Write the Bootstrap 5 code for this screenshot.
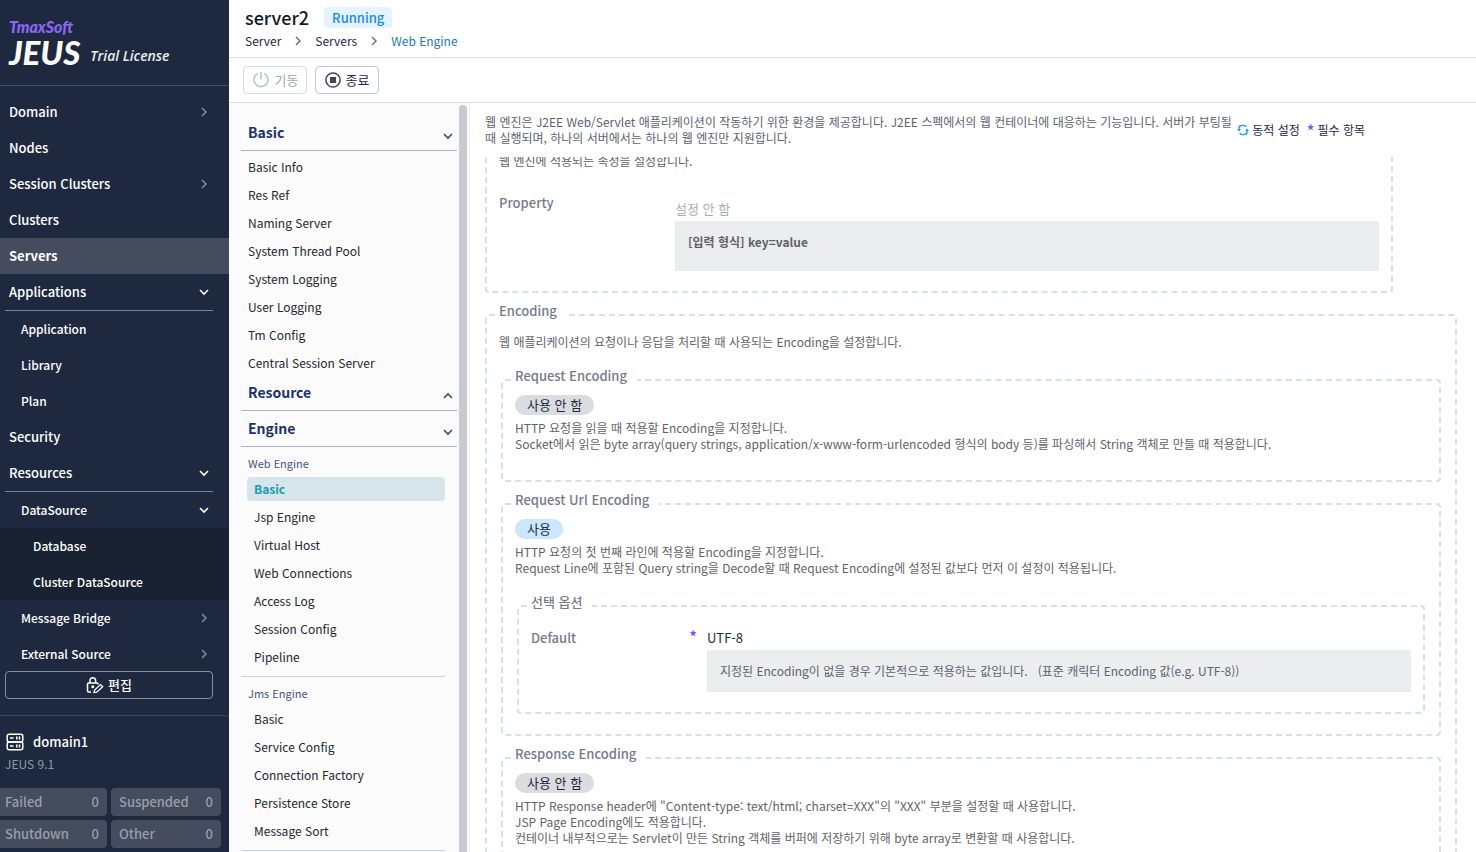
<!DOCTYPE html>
<html lang="ko">
<head>
<meta charset="utf-8">
<meta name="viewport" content="width=device-width, initial-scale=1">
<title>JEUS WebAdmin - server2</title>
<link href="https://cdn.jsdelivr.net/npm/bootstrap@5.3.0/dist/css/bootstrap.min.css" rel="stylesheet">
<style>
  body { font-family: "Noto Sans CJK KR", "Noto Sans", sans-serif; font-size: 13px; line-height: 16px; color: #1e293f; background: #fff; }
  a { text-decoration: none; color: inherit; }
  svg { flex: none; }

  /* left navigation */
  .side { width: 229px; background: #1e293f; color: #fff; }
  .brand { height: 86px; padding: 18px 9px 0; border-bottom: 1px solid #454e60; font-family: Lato, sans-serif; font-style: italic; }
  .brand-top { font-size: 16px; line-height: 18px; font-weight: 900; color: #8b67f7; }
  .brand-name { font-size: 33px; line-height: 32px; font-weight: 900; margin-right: 10px; }
  .brand-note { font-family: "Open Sans", sans-serif; font-size: 14px; line-height: 25px; font-weight: 600; color: #e9ebee; }
  .menu { padding-top: 8px; min-height: 0; overflow: hidden; }
  .menu a { display: flex; align-items: center; justify-content: space-between; height: 36px; padding: 0 17px 0 9px; font-weight: 500; flex: none; }
  .menu a.on { background: #454c5e; font-weight: 700; }
  .menu a.sub { padding-left: 21px; font-size: 12px; }
  .menu a.leaf { padding-left: 33px; font-size: 12px; background: #182230; }
  .menu hr { margin: 0 16px 0 5px; border-top: 1px solid #7c8493; opacity: 1; flex: none; }
  .menu .shut { color: #848b99; }
  .edit { margin: 0 16px 16px 5px; height: 28px; border: 1px solid #878e9a; border-radius: 4px; background: none; color: #fff; font-weight: 500; flex: none; }
  .domain { border-top: 1px solid #3d4658; border-top-right-radius: 4px; padding: 16px 8px 4px 0; }
  .domain-name { padding-left: 6px; gap: 9px; }
  .domain h2 { font-size: 13px; line-height: 20px; font-weight: 500; margin: 0; }
  .domain .ver { color: #9299a5; font-size: 12px; line-height: 16px; padding: 4px 5px 16px; }
  .stats { display: grid; grid-template-columns: 107px 1fr; gap: 4px; }
  .stat { display: flex; justify-content: space-between; height: 28px; line-height: 28px; padding: 0 8px; font-weight: 500; background: #454c5e; color: #989eaa; border-radius: 4px; }
  .stat:nth-child(odd) { padding-left: 5px; border-radius: 0 4px 4px 0; }

  /* page head */
  .page-head { height: 58px; padding: 6px 16px 0; border-bottom: 1px solid #dcdde1; }
  .page-head h1 { font-size: 18px; line-height: 22px; font-weight: 500; margin: 0 15px 0 0; color: #101828; }
  .state { line-height: 21px; font-weight: 500; padding: 0 8px; border-radius: 4px; background: #e5f3ff; color: #1a8ae8; }
  .crumbs { gap: 13px; font-size: 12px; margin-top: 5px; }
  .crumbs .here { color: #1e78b8; }
  .tools { height: 45px; padding: 8px 14px 0; gap: 8px; border-bottom: 1px solid #dcdde1; }
  .tool { height: 28px; width: 64px; padding: 0; border: 1px solid #c4c8d0; border-radius: 4px; background: #fff; color: #1e293f; gap: 5px; }
  .tool:disabled { color: #a3a8b1; border-color: #d9dce0; }

  /* second-level navigation */
  .panel { width: 241px; background: #fbfbfb; border-right: 1px solid #f0f1f2; }
  .panel-list { padding: 12px 2px 0 12px; overflow: hidden; font-size: 12px; }
  .panel-list h3 { display: flex; justify-content: space-between; height: 36px; margin: 0; padding: 0 3px 0 7px; border-bottom: 1px solid #adb4c4; font-size: 14px; line-height: 35px; font-weight: 700; color: #1b326b; flex: none; }
  .panel-list h3 svg { margin-top: 15px; color: #3e4966; }
  .panel-list a { display: block; height: 24px; line-height: 24px; margin: 2px 12px 2px 6px; padding-left: 7px; border-radius: 4px; flex: none; color: #23272f; }
  .panel-list .top a { margin: 4px 12px 0 0; }
  .panel-list a.on { background: #d6e5ea; color: #1b9ab3; font-weight: 700; }
  .panel-list h4 { font-size: 11px; line-height: 24px; font-weight: 400; margin: 0; padding: 4px 7px 0; color: #465583; flex: none; }
  .panel-list hr { margin: 5px 12px 0 0; border-top: 1px solid #cdd1d9; opacity: 1; flex: none; }
  .thumb { width: 8px; margin-top: 2px; margin-right: 2px; border-radius: 4px 4px 0 0; background: #c6cbd2; }

  /* settings */
  .intro { height: 54px; padding: 11px 111px 0 15px; gap: 1px; font-size: 12px; color: #5b6370; }
  .key { color: #1e293f; gap: 3px; padding-bottom: 12px; }
  .star { color: #7c4dff; font-size: 16px; font-weight: 500; }
  .sheet { overflow: hidden; min-height: 0; padding: 0 17px 0 13px; }
  fieldset, .group { border: 2px dashed #d8dfe9; border-radius: 4px; margin: 10px 2px 0; padding: 3px 12px 20px; }
  .group { border-top: 0; border-radius: 0 0 4px 4px; margin: 0 66px 0 2px; padding-top: 0; }
  .group > p { margin-top: -4px; }
  .group .line { padding-top: 14px; }
  legend { float: none; width: auto; margin: 0 0 0 -4px; padding: 0 10px 8px 4px; font-size: 13px; line-height: 16px; font-weight: 500; color: #747b89; }
  .sheet p { margin-bottom: 0; padding-bottom: 8px; font-size: 12px; color: #5f6368; }
  .use { display: inline-block; height: 20px; line-height: 20px; padding: 0 12px; border-radius: 10px; background: #dadce0; margin-bottom: 5px; vertical-align: top; }
  .use.yes { background: #c9e8ff; }
  .line { display: flex; padding-top: 5px; }
  .name { width: 176px; flex: none; padding-right: 10px; line-height: 24px; font-weight: 500; color: #747b89; }
  .name .star { line-height: 20px; }
  .val { line-height: 24px; }
  .val.none { padding-top: 6px; color: #a9aeb6; }
  .hint { background: #ecedef; padding: 13px; line-height: 16px; font-size: 12px; color: #5b6370; }
</style>
</head>
<body>
<svg class="d-none" aria-hidden="true">
  <symbol id="right" viewBox="0 0 16 16"><path d="M6 4l4 4-4 4" fill="none" stroke="currentColor" stroke-width="1.5"/></symbol>
  <symbol id="down" viewBox="0 0 16 16"><path d="M4 6l4 4 4-4" fill="none" stroke="currentColor" stroke-width="1.6"/></symbol>
  <symbol id="up" viewBox="0 0 16 16"><path d="M4 10l4-4 4 4" fill="none" stroke="currentColor" stroke-width="1.6"/></symbol>
</svg>
<div class="d-flex vh-100 overflow-hidden">

  <aside class="side d-flex flex-column flex-shrink-0">
    <div class="brand flex-shrink-0">
      <div class="brand-top">TmaxSoft</div>
      <div class="d-flex align-items-end"><span class="brand-name">JEUS</span><span class="brand-note">Trial License</span></div>
    </div>
    <nav class="menu d-flex flex-column flex-grow-1">
      <a href="#">Domain<svg class="shut" width="16" height="16"><use href="#right"/></svg></a>
      <a href="#">Nodes</a>
      <a href="#">Session Clusters<svg class="shut" width="16" height="16"><use href="#right"/></svg></a>
      <a href="#">Clusters</a>
      <a href="#" class="on">Servers</a>
      <a href="#">Applications<svg width="16" height="16"><use href="#down"/></svg></a>
      <hr>
      <a href="#" class="sub">Application</a>
      <a href="#" class="sub">Library</a>
      <a href="#" class="sub">Plan</a>
      <a href="#">Security</a>
      <a href="#">Resources<svg width="16" height="16"><use href="#down"/></svg></a>
      <hr>
      <a href="#" class="sub">DataSource<svg width="16" height="16"><use href="#down"/></svg></a>
      <a href="#" class="leaf">Database</a>
      <a href="#" class="leaf">Cluster DataSource</a>
      <a href="#" class="sub">Message Bridge<svg class="shut" width="16" height="16"><use href="#right"/></svg></a>
      <a href="#" class="sub">External Source<svg class="shut" width="16" height="16"><use href="#right"/></svg></a>
    </nav>
    <button type="button" class="edit d-flex align-items-center justify-content-center gap-1 p-0">
      <svg width="18" height="18" viewBox="0 0 18 18" fill="none" stroke="currentColor" stroke-width="1.5"><path d="M5 16H2.500Q1.500 16 1.500 15V8Q1.500 7 2.500 7H11Q12 7 12 8V8.500M4 7V4.500A2.800 2.800 0 0 1 9.600 4.500V7"/><circle cx="6.800" cy="10.800" r=".8" fill="currentColor"/><path d="M8 16.500L8.600 14L14.500 8.600L16.700 10.700L10.700 16.200Z" stroke-width="1.300"/></svg>
      편집
    </button>
    <section class="domain flex-shrink-0">
      <div class="domain-name d-flex align-items-center">
        <svg width="18" height="18" viewBox="0 0 18 18" fill="none" stroke="currentColor" stroke-width="1.500"><rect x="1.200" y="1.200" width="15.600" height="7.800" rx="2"/><rect x="1.200" y="9" width="15.600" height="7.800" rx="2"/><path d="M4 5H7.500M4 13H7.500M10.800 3.500V6.500M13.500 3.500V6.500M10.800 11.500V14.500M13.500 11.500V14.500"/></svg>
        <h2>domain1</h2>
      </div>
      <div class="ver">JEUS 9.1</div>
      <div class="stats">
        <div class="stat"><span>Failed</span><span>0</span></div>
        <div class="stat"><span>Suspended</span><span>0</span></div>
        <div class="stat"><span>Shutdown</span><span>0</span></div>
        <div class="stat"><span>Other</span><span>0</span></div>
      </div>
    </section>
  </aside>

  <div class="d-flex flex-column flex-grow-1 overflow-hidden">
    <header class="page-head flex-shrink-0">
      <div class="d-flex align-items-center">
        <h1>server2</h1><span class="state">Running</span>
      </div>
      <nav class="crumbs d-flex align-items-center" aria-label="breadcrumb">
        <a href="#">Server</a><svg width="8" height="16" viewBox="4 0 8 16"><path d="M6 4l4 4-4 4" fill="none" stroke="#6b7280" stroke-width="1.500"/></svg>
        <a href="#">Servers</a><svg width="8" height="16" viewBox="4 0 8 16"><path d="M6 4l4 4-4 4" fill="none" stroke="#6b7280" stroke-width="1.500"/></svg>
        <a href="#" class="here">Web Engine</a>
      </nav>
    </header>
    <div class="tools d-flex flex-shrink-0">
      <button type="button" class="tool d-flex align-items-center justify-content-center" disabled>
        <svg width="18" height="18" viewBox="0 0 18 18" fill="none" stroke="#bfc3ca" stroke-width="1.600"><path d="M6 2.400A7 7 0 1 0 12 2.400M9 1V8.500"/></svg>기동
      </button>
      <button type="button" class="tool d-flex align-items-center justify-content-center">
        <svg width="16" height="16" viewBox="0 0 16 16"><circle cx="8" cy="8" r="7.100" fill="none" stroke="#3e475a" stroke-width="1.500"/><rect x="5" y="5" width="6" height="6" fill="#3e475a"/></svg>종료
      </button>
    </div>

    <div class="d-flex flex-grow-1 overflow-hidden">
      <div class="panel d-flex flex-shrink-0">
        <nav class="panel-list d-flex flex-column flex-grow-1">
          <h3>Basic<svg width="12" height="12" viewBox="2 2 12 12"><use href="#down" width="16" height="16"/></svg></h3>
          <div class="top">
            <a href="#">Basic Info</a>
            <a href="#">Res Ref</a>
            <a href="#">Naming Server</a>
            <a href="#">System Thread Pool</a>
            <a href="#">System Logging</a>
            <a href="#">User Logging</a>
            <a href="#">Tm Config</a>
            <a href="#">Central Session Server</a>
          </div>
          <h3>Resource<svg width="12" height="12" viewBox="2 2 12 12"><use href="#up" width="16" height="16"/></svg></h3>
          <h3>Engine<svg width="12" height="12" viewBox="2 2 12 12"><use href="#down" width="16" height="16"/></svg></h3>
          <h4>Web Engine</h4>
          <a href="#" class="on">Basic</a>
          <a href="#">Jsp Engine</a>
          <a href="#">Virtual Host</a>
          <a href="#">Web Connections</a>
          <a href="#">Access Log</a>
          <a href="#">Session Config</a>
          <a href="#">Pipeline</a>
          <hr>
          <h4>Jms Engine</h4>
          <a href="#">Basic</a>
          <a href="#">Service Config</a>
          <a href="#">Connection Factory</a>
          <a href="#">Persistence Store</a>
          <a href="#">Message Sort</a>
          <hr>
        </nav>
        <div class="thumb flex-shrink-0"></div>
      </div>

      <main class="d-flex flex-column flex-grow-1 overflow-hidden">
        <div class="intro d-flex flex-shrink-0">
          <div class="flex-grow-1">웹 엔진은 J2EE Web/Servlet 애플리케이션이 작동하기 위한 환경을 제공합니다. J2EE 스펙에서의 웹 컨테이너에 대응하는 기능입니다. 서버가 부팅될 때 실행되며, 하나의 서버에서는 하나의 웹 엔진만 지원합니다.</div>
          <div class="key d-flex align-items-center flex-shrink-0">
            <svg width="12" height="12" viewBox="0 0 12 12" fill="none" stroke="#2d9bf0" stroke-width="1.500"><path d="M2 6.500V4Q2 1.500 4.500 1.500H7Q8.500 1.500 9.300 2.800M10 5.500V8Q10 10.500 7.500 10.500H5Q3.500 10.500 2.700 9.200"/><path d="M0 5H4L2 7.500ZM8 7H12L10 4.500Z" fill="#2d9bf0" stroke="none"/></svg>
            <span>동적 설정</span>
            <span class="star ms-1">*</span>
            <span>필수 항목</span>
          </div>
        </div>

        <div class="sheet flex-grow-1">
          <section class="group">
            <p>웹 엔진에 적용되는 속성을 설정합니다.</p>
            <div class="line">
              <div class="name">Property</div>
              <div class="flex-grow-1">
                <div class="val none">설정 안 함</div>
                <div class="hint fw-bold"><p>[입력 형식] key=value</p></div>
              </div>
            </div>
          </section>

          <fieldset>
            <legend>Encoding</legend>
            <p class="mt-1">웹 애플리케이션의 요청이나 응답을 처리할 때 사용되는 Encoding을 설정합니다.</p>
            <fieldset>
              <legend>Request Encoding</legend>
              <span class="use">사용 안 함</span>
              <p>HTTP 요청을 읽을 때 적용할 Encoding을 지정합니다.<br>Socket에서 읽은 byte array(query strings, application/x-www-form-urlencoded 형식의 body 등)를 파싱해서 String 객체로 만들 때 적용합니다.</p>
            </fieldset>
            <fieldset>
              <legend>Request Url Encoding</legend>
              <span class="use yes">사용</span>
              <p>HTTP 요청의 첫 번째 라인에 적용할 Encoding을 지정합니다.<br>Request Line에 포함된 Query string을 Decode할 때 Request Encoding에 설정된 값보다 먼저 이 설정이 적용됩니다.</p>
              <fieldset>
                <legend>선택 옵션</legend>
                <div class="line">
                  <div class="name d-flex justify-content-between"><span>Default</span><span class="star">*</span></div>
                  <div class="flex-grow-1">
                    <div class="val">UTF-8</div>
                    <div class="hint">지정된 Encoding이 없을 경우 기본적으로 적용하는 값입니다. &nbsp; (표준 캐릭터 Encoding 값(e.g. UTF-8))</div>
                  </div>
                </div>
              </fieldset>
            </fieldset>
            <fieldset>
              <legend>Response Encoding</legend>
              <span class="use">사용 안 함</span>
              <p>HTTP Response header에 "Content-type: text/html; charset=XXX"의 "XXX" 부분을 설정할 때 사용합니다.<br>JSP Page Encoding에도 적용합니다.<br>컨테이너 내부적으로는 Servlet이 만든 String 객체를 버퍼에 저장하기 위해 byte array로 변환할 때 사용합니다.</p>
            </fieldset>
          </fieldset>
        </div>
      </main>
    </div>
  </div>
</div>
<script src="https://cdn.jsdelivr.net/npm/bootstrap@5.3.0/dist/js/bootstrap.bundle.min.js"></script>
</body>
</html>
